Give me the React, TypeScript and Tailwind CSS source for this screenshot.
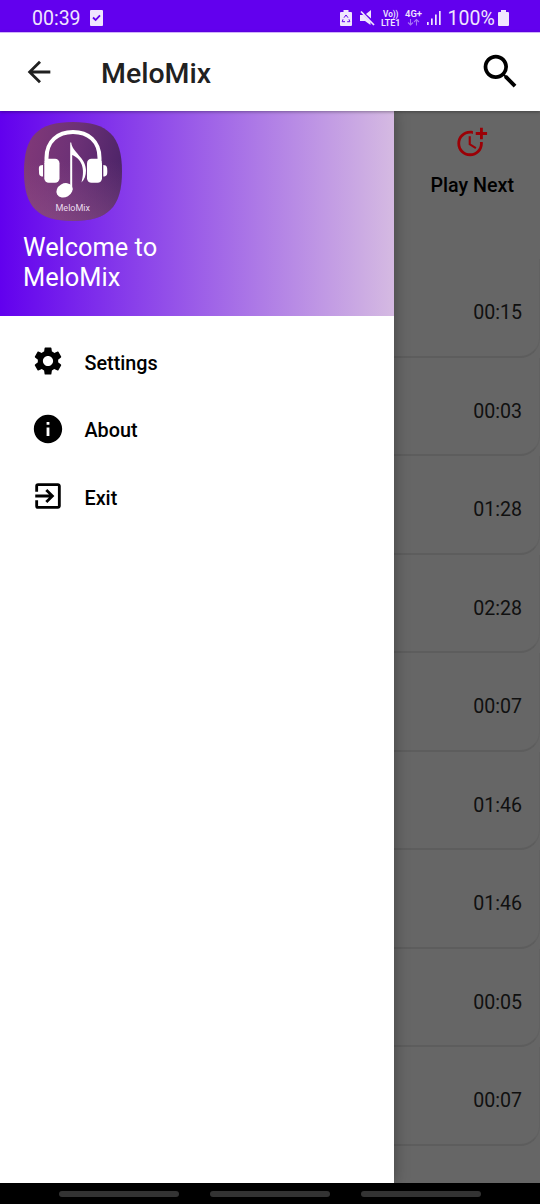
import type { ReactNode } from "react";

const durations = ["00:15", "00:03", "01:28", "02:28", "00:07", "01:46", "01:46", "00:05", "00:07"];

function Icon({ className, children }: { className: string; children: ReactNode }) {
  return (
    <svg viewBox="0 0 24 24" fill="currentColor" className={`block shrink-0 ${className}`}>
      {children}
    </svg>
  );
}

function StatusBar() {
  return (
    <div className="flex h-8 shrink-0 items-center bg-[#6200ee] pl-8 pt-1 text-[#f0e6fe]">
      <span className="w-[57.5px] pt-px text-[19.5px] leading-none">00:39</span>
      <svg viewBox="0 0 13 16" className="h-4 w-[13px]">
        <rect width="13" height="16" rx="1" fill="currentColor" />
        <path d="M3 7.5 5.6 10 10 5.3" fill="none" stroke="#6200ee" strokeWidth="1.8" />
      </svg>
      <div className="ml-auto flex items-center pr-[31.500px]">
        <svg viewBox="0 0 12 16" className="mr-[8px] h-4 w-3">
          <path d="M3.5 0h5v2H11a1 1 0 0 1 1 1v12a1 1 0 0 1-1 1H1a1 1 0 0 1-1-1V3a1 1 0 0 1 1-1h2.5z" fill="currentColor" />
          <path d="M4 7.700 6 5l2 2.700M9 9.300l.8 2.400H7.200M5 11.700H2.200L3 9.300" fill="none" stroke="#6200ee" strokeWidth="1" />
        </svg>
        <svg viewBox="0 0 15 16" className="mr-[6px] h-4 w-[15px]">
          <path d="M0 5h3.500l2 2 5 5V15L5 11H0zM6 4l5-4v8.500z" fill="currentColor" />
          <path d="m1 1.500 13 13.500" stroke="currentColor" strokeWidth="1.700" />
        </svg>
        <svg viewBox="0 0 20 18" className="mr-[4px] h-[18px] w-5 overflow-visible" fill="currentColor">
          <text x="2" y="7.800" fontSize="8.800" fontWeight="600" textLength="15.500" lengthAdjust="spacingAndGlyphs">Vo))</text>
          <text x="0" y="16.500" fontSize="9.800" fontWeight="600" textLength="19.500" lengthAdjust="spacingAndGlyphs">LTE1</text>
        </svg>
        <svg viewBox="0 0 18 18" className="mr-[4px] h-[18px] w-[18px] overflow-visible" fill="currentColor">
          <text x="0" y="8" fontSize="9.500" fontWeight="600" textLength="17" lengthAdjust="spacingAndGlyphs">4G+</text>
          <path d="M5.500 10v6M3 13.500l2.500 2.500L8 13.500M11.500 16.500v-6M9 13l2.500-2.500 2.500 2.500" fill="none" stroke="#a875f6" strokeWidth="1.100" />
        </svg>
        <svg viewBox="0 0 14 16" className="mr-[7px] h-4 w-[14px]" fill="currentColor">
          <path d="M0 12h1.700v3H0zM4 8.500h1.700V15H4zM8 4.500h1.700V15H8zM12 1h1.700v14H12z" />
        </svg>
        <span className="mr-[3px] w-[47px] whitespace-nowrap pt-px text-[19.500px] leading-none">100%</span>
        <svg viewBox="0 0 11 16" className="h-4 w-[11px]" fill="currentColor">
          <path d="M3 0h5v2h2a1 1 0 0 1 1 1v12a1 1 0 0 1-1 1H1a1 1 0 0 1-1-1V3a1 1 0 0 1 1-1h2z" />
        </svg>
      </div>
    </div>
  );
}

function Toolbar() {
  return (
    <header className="relative z-20 flex h-[79px] shrink-0 items-center border-t border-t-[#d0b3fa] bg-white pl-[21.500px] pr-[17px] shadow-[0_1px_3px_rgba(0,0,0,0.35)]">
      <Icon className="mb-px size-[34px] text-[#202020]">
        <path d="M20 11H7.830l5.590-5.590L12 4l-8 8 8 8 1.410-1.410L7.830 13H20z" />
      </Icon>
      <h1 className="ml-[45.500px] mt-[4px] text-[28.500px] font-medium leading-none text-[#212121]">MeloMix</h1>
      <Icon className="mb-[2px] ml-auto size-[45px] text-black">
        <path d="M15.500 14h-.79l-.28-.27A6.471 6.471 0 0 0 16 9.500 6.500 6.500 0 1 0 9.500 16c1.610 0 3.090-.59 4.230-1.570l.27.28v.79l5 4.990L20.490 19zm-6 0C7.010 14 5 11.990 5 9.500S7.010 5 9.500 5 14 7.010 14 9.500 11.990 14 9.500 14z" />
      </Icon>
    </header>
  );
}

function Logo() {
  return (
    <svg viewBox="0 0 100 100" className="block size-[100px]">
      <defs>
        <linearGradient id="logoFill" x1="0" y1="0.300" x2="1" y2="0.500">
          <stop offset="0" stopColor="#803878" />
          <stop offset="0.500" stopColor="#6c3176" />
          <stop offset="1" stopColor="#4d2468" />
        </linearGradient>
        <linearGradient id="logoGlow" x1="0" y1="0" x2="0" y2="1">
          <stop offset="0.400" stopColor="#a06090" stopOpacity="0" />
          <stop offset="1" stopColor="#a06090" stopOpacity="0.400" />
        </linearGradient>
      </defs>
      <path d="M50 0C85 0 99 14 99 49.500S85 99 50 99 1 85 1 49.500 15 0 50 0z" fill="url(#logoFill)" />
      <path d="M50 0C85 0 99 14 99 49.500S85 99 50 99 1 85 1 49.500 15 0 50 0z" fill="url(#logoGlow)" />
      <path d="M23.500 40V36C23.500 19 35 10 50 10S76.500 19 76.500 36V40" fill="none" stroke="white" strokeWidth="4" />
      <g fill="white">
        <rect x="21.300" y="36.700" width="15.200" height="24" rx="4.500" />
        <rect x="64" y="36.700" width="15" height="24" rx="4.500" />
        <path d="M20 43c-5 0-4 3-4 6s0 5.500 4 5.500zM80.300 43c4 0 4 3 4 6s0 5.500-4 5.500z" />
        <ellipse cx="41.500" cy="68.300" rx="8.500" ry="6.800" transform="rotate(-30 41.500 68.300)" />
        <path d="M47.200 20.500h1c1 10 14.800 15 14.800 28 0 5-1.500 9-4.500 12C61.500 50 61 38 49.200 33V68h-2z" />
      </g>
      <text x="32.500" y="88.500" fontSize="8.500" textLength="34.500" lengthAdjust="spacingAndGlyphs" fill="#eadced">MeloMix</text>
    </svg>
  );
}

function MenuItem({ label, children }: { label: string; children: ReactNode }) {
  return (
    <li className="flex h-[67.500px] items-center pl-[31px]">
      <Icon className="mb-px size-[34px]">{children}</Icon>
      <span className="ml-[19.500px] mt-[4px] text-[19.800px] font-medium leading-none">{label}</span>
    </li>
  );
}

function Drawer() {
  return (
    <aside className="relative z-10 w-[394px] shrink-0 bg-white shadow-[0_0_14px_rgba(0,0,0,0.350)]">
      <div className="h-[205.400px] bg-linear-to-r/srgb from-[#6200ee] to-[#d5bae2] pl-[23px] pt-[11px]">
        <Logo />
        <p className="mt-[11px] w-[150px] text-[25.400px] leading-[29.600px] text-white">
          Welcome to MeloMix
        </p>
      </div>
      <ul className="pt-[11.600px] text-black">
        <MenuItem label="Settings">
          <path d="M19.140 12.940c.04-.3.060-.61.060-.94 0-.32-.02-.64-.07-.94l2.030-1.580a.49.49 0 0 0 .12-.61l-1.920-3.320a.488.488 0 0 0-.59-.22l-2.390.96c-.5-.38-1.030-.7-1.620-.94l-.36-2.540a.484.484 0 0 0-.48-.41h-3.840c-.24 0-.43.17-.47.41l-.36 2.540c-.59.24-1.130.57-1.620.94l-2.390-.96c-.22-.08-.47 0-.59.22L2.740 8.870c-.12.21-.08.47.12.61l2.030 1.580c-.05.3-.09.63-.09.94s.02.64.07.94l-2.030 1.580a.49.49 0 0 0-.12.61l1.920 3.320c.12.22.37.29.59.22l2.390-.96c.5.38 1.030.7 1.620.94l.36 2.540c.05.24.24.41.48.41h3.840c.24 0 .44-.17.47-.41l.36-2.540c.59-.24 1.130-.56 1.620-.94l2.390.96c.22.08.47 0 .59-.22l1.920-3.320c.12-.22.07-.47-.12-.61zM12 15.600c-1.980 0-3.600-1.620-3.600-3.600s1.620-3.600 3.600-3.600 3.600 1.620 3.600 3.600-1.620 3.600-3.600 3.600z" />
        </MenuItem>
        <MenuItem label="About">
          <path d="M12 2C6.480 2 2 6.480 2 12s4.480 10 10 10 10-4.480 10-10S17.520 2 12 2zm1 15h-2v-6h2zm0-8h-2V7h2z" />
        </MenuItem>
        <MenuItem label="Exit">
          <path d="M10.090 15.590 11.500 17l5-5-5-5-1.410 1.410L12.670 11H3v2h9.670zM19 3H5a2 2 0 0 0-2 2v4h2V5h14v14H5v-4H3v4a2 2 0 0 0 2 2h14c1.100 0 2-.9 2-2V5c0-1.100-.9-2-2-2z" />
        </MenuItem>
      </ul>
    </aside>
  );
}

function SongList() {
  return (
    <main className="flex min-w-0 flex-1 flex-col bg-[#666666]">
      <div className="flex h-[148.300px] shrink-0 flex-col items-center pl-[10.500px] pt-[14px]">
        <Icon className="size-[34px] -translate-x-[0.500px] text-[#9b0006]">
          <path d="M10 8v6l4.700 2.900.8-1.200-4-2.400V8zM17.920 12c.05.33.08.66.08 1 0 3.900-3.100 7-7 7s-7-3.100-7-7 3.100-7 7-7c.7 0 1.370.1 2 .29V4.230c-.64-.15-1.310-.23-2-.23-5 0-9 4-9 9s4 9 9 9 9-4 9-9c0-.34-.02-.67-.06-1zM20 5V2h-2v3h-3v2h3v3h2V7h3V5z" />
        </Icon>
        <span className="mt-[17px] whitespace-nowrap text-[19.700px] font-medium leading-none text-black">Play Next</span>
      </div>
      {durations.map((time, i) => (
        <div
          key={i}
          className="flex h-[98.500px] shrink-0 items-center justify-end rounded-br-[20px] border-b-2 border-r border-b-[#5d5d5d] border-r-[#616161] pr-[17px] pt-[10.500px] text-[19.600px] leading-none text-[#101010]"
        >
          {time}
        </div>
      ))}
    </main>
  );
}

export default function App() {
  return (
    <div className="flex h-[1204px] w-[540px] flex-col overflow-hidden bg-white font-[Roboto,sans-serif]">
      <StatusBar />
      <Toolbar />
      <div className="flex min-h-0 flex-1 overflow-hidden">
        <Drawer />
        <SongList />
      </div>
      <nav className="relative z-20 flex h-[21px] shrink-0 items-center justify-center gap-[31px] bg-black">
        <span className="h-1.5 w-[120px] rounded-full bg-[#333333]" />
        <span className="h-1.5 w-[120px] rounded-full bg-[#333333]" />
        <span className="h-1.5 w-[120px] rounded-full bg-[#333333]" />
      </nav>
    </div>
  );
}
